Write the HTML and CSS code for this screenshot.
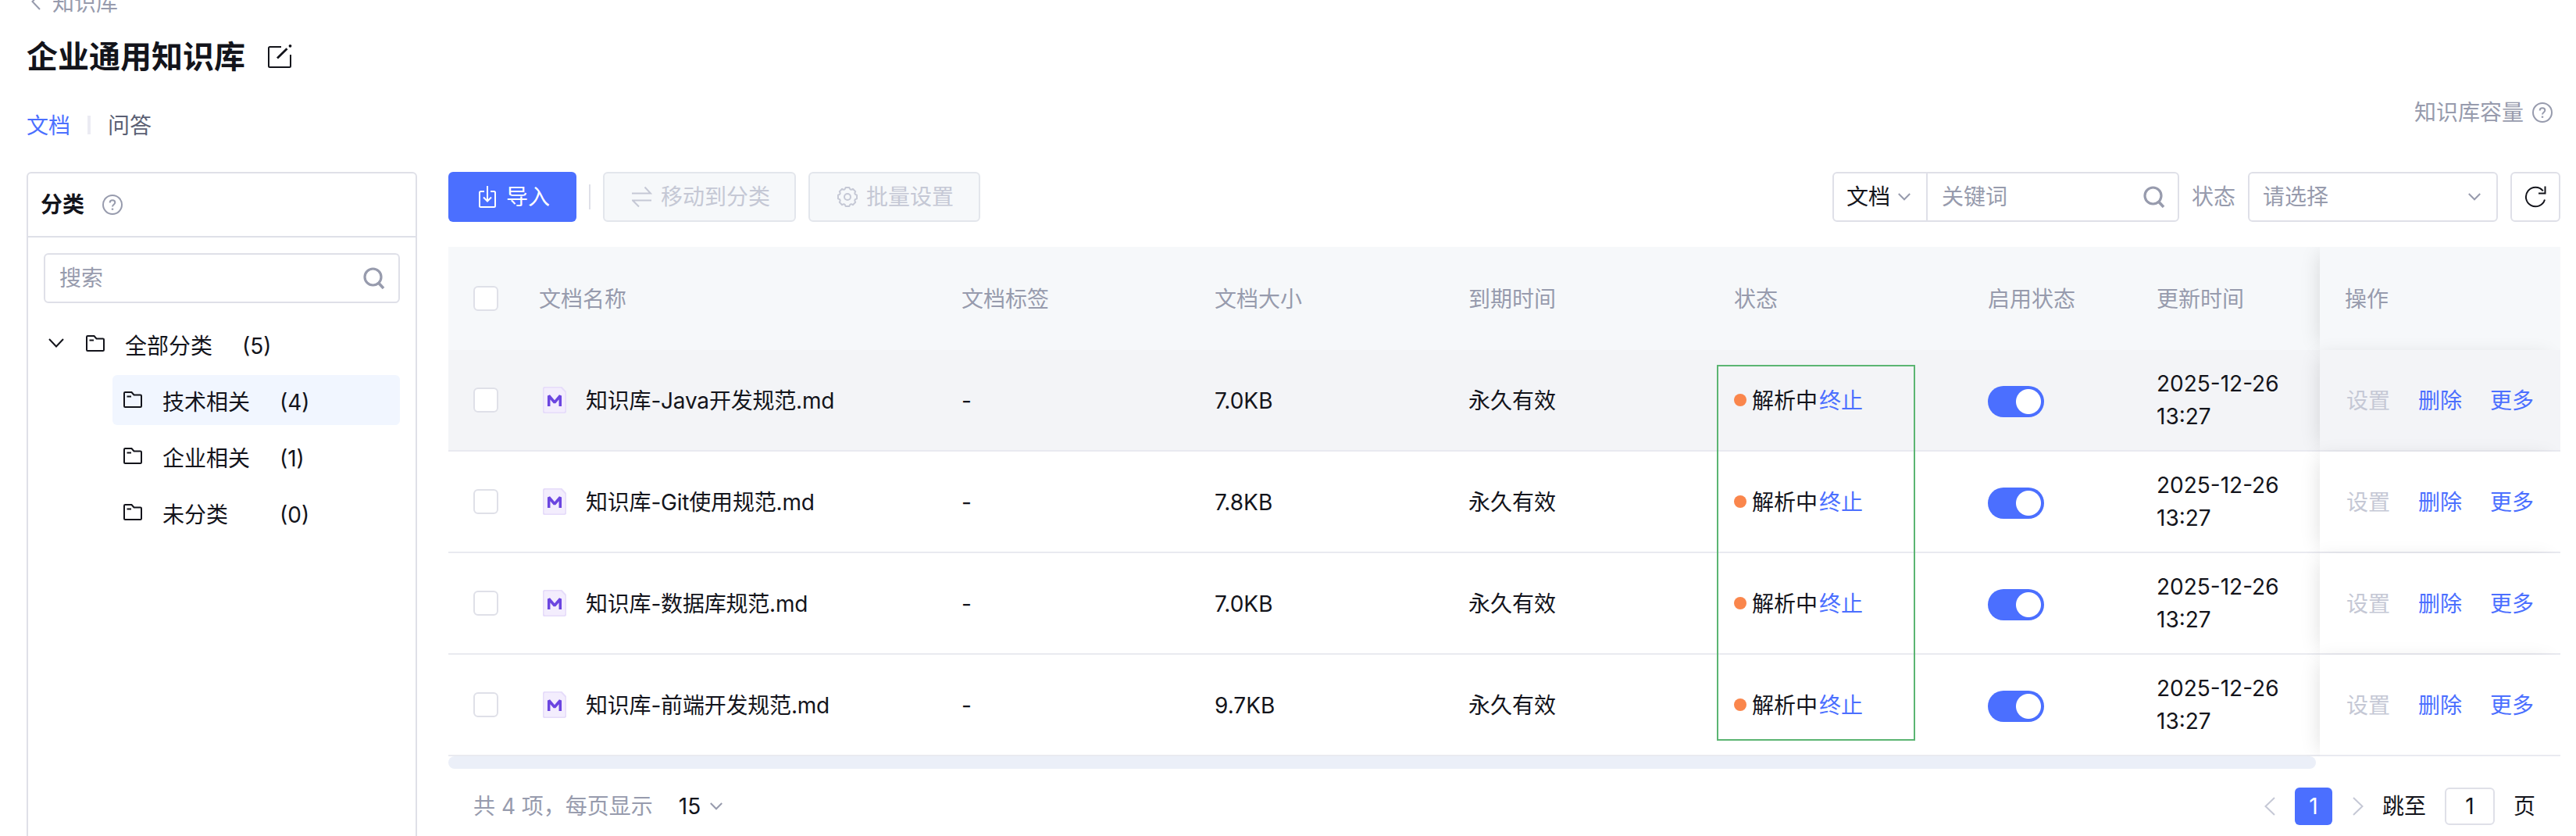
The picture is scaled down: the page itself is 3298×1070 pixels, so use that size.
FILE: index.html
```html
<!DOCTYPE html>
<html lang="zh-CN">
<head>
  <meta charset="UTF-8">
  <title>企业通用知识库</title>
  <link rel="stylesheet" href="styles.css">
</head>
<body>
  <svg class="sprite" xmlns="http://www.w3.org/2000/svg">
    <symbol id="i-help" viewBox="0 0 26 26">
      <circle cx="13" cy="13" r="12" stroke-width="2"/>
      <path d="M9.700 10.500c0-2 1.300-3.200 3.300-3.200s3.300 1.200 3.300 3c0 2.200-3.300 2.600-3.300 5.200" stroke-width="2"/>
      <path d="M13 17.600v2.200" stroke-width="2.400"/>
    </symbol>
    <symbol id="i-search" viewBox="0 0 28 28">
      <circle cx="12.500" cy="12.500" r="10.500" stroke-width="3.200"/>
      <path d="M20 20.500l6 6.500" stroke-width="3.600"/>
    </symbol>
    <symbol id="i-down" viewBox="0 0 16 10">
      <path d="M.8 1L8 8.300 15.200 1" stroke-width="2"/>
    </symbol>
    <symbol id="i-folder" viewBox="0 0 24 21">
      <path d="M1 2.200C1 1.500 1.500 1 2.200 1H10.500l3 3.500h8.300c.7 0 1.200.5 1.200 1.200v13.100c0 .7-.5 1.200-1.200 1.200H2.200C1.500 20 1 19.500 1 18.800zM4.500 6.500h5.500" stroke-width="2"/>
    </symbol>
    <symbol id="i-md" viewBox="0 0 30 34">
      <path d="M3.500.5h20L29.500 7v23.500a3 3 0 0 1-3 3h-23a3 3 0 0 1-3-3v-27a3 3 0 0 1 3-3z" fill="#f3edfd" stroke="#e6dcfa"/>
      <path d="M7.700 25V11.500l7.300 8.500 7.300-8.500V25" stroke="#6b45e0" stroke-width="3.500" stroke-linejoin="bevel"/>
    </symbol>
  </svg>

  <div class="crumb">
    <svg class="crumb-back" viewBox="0 0 12 22"><path d="M11 1L1.500 11 11 21"/></svg>
    <span>知识库</span>
  </div>

  <div class="title">
    <h1>企业通用知识库</h1>
    <svg class="edit" viewBox="0 0 32 32">
      <path d="M18 4H3.500C2.700 4 2 4.700 2 5.500v23c0 .8.700 1.500 1.500 1.500h25c.8 0 1.500-.7 1.500-1.500V14"/>
      <path d="M13 18.500L25.500 6.300" stroke-width="2.800"/>
      <circle cx="29.500" cy="2.800" r="1.900"/>
    </svg>
  </div>

  <div class="subbar">
    <div class="tabs">
      <span class="tab active">文档</span>
      <i class="tab-line"></i>
      <span class="tab">问答</span>
    </div>
    <div class="capacity">知识库容量<svg class="help"><use href="#i-help"/></svg></div>
  </div>

  <div class="layout">
    <aside class="panel">
      <div class="panel-head">分类<svg class="help"><use href="#i-help"/></svg></div>
      <div class="panel-search">搜索<svg class="search"><use href="#i-search"/></svg></div>
      <div class="tree">
        <div class="node root">
          <svg class="arrow" viewBox="0 0 20 12"><path d="M1 1l9 9.500L19 1"/></svg>
          <svg class="folder"><use href="#i-folder"/></svg>
          <span class="node-name">全部分类</span><span>(5)</span>
        </div>
        <div class="node active">
          <svg class="folder"><use href="#i-folder"/></svg>
          <span class="node-name">技术相关</span><span>(4)</span>
        </div>
        <div class="node">
          <svg class="folder"><use href="#i-folder"/></svg>
          <span class="node-name">企业相关</span><span>(1)</span>
        </div>
        <div class="node">
          <svg class="folder"><use href="#i-folder"/></svg>
          <span class="node-name">未分类</span><span>(0)</span>
        </div>
      </div>
    </aside>

    <main class="content">
      <div class="toolbar">
        <div class="btn primary">
          <svg viewBox="0 0 26 28"><path d="M9 7H4.500C3.700 7 3 7.700 3 8.500v17c0 .8.700 1.500 1.500 1.500h17c.8 0 1.500-.7 1.500-1.500v-17C23 7.700 22.300 7 21.500 7H17M13 0v19.500M8 14.500l5 5 5-5"/></svg>
          导入
        </div>
        <i class="btn-line"></i>
        <div class="btn disabled move">
          <svg viewBox="0 0 26 28"><path d="M0 9.500h24L16.500 1.500M25 18.500H1l8 8"/></svg>
          移动到分类
        </div>
        <div class="btn disabled batch">
          <svg viewBox="0 0 26 28" stroke-linejoin="round"><path d="M25.070 11.650V16.350Q20.850 17.250 23.200 20.880L19.880 24.200Q16.250 21.850 15.350 26.070H10.650Q9.750 21.850 6.120 24.200L2.800 20.880Q5.150 17.250.93 16.350V11.650Q5.150 10.750 2.800 7.120L6.120 3.800Q9.750 6.150 10.650 1.930H15.350Q16.250 6.150 19.880 3.800L23.200 7.120Q20.850 10.750 25.070 11.650z"/><circle cx="13" cy="14" r="4"/></svg>
          批量设置
        </div>

        <div class="filters">
          <div class="combo">
            <div class="combo-type">文档<svg class="down"><use href="#i-down"/></svg></div>
            <div class="combo-input">关键词<svg class="search"><use href="#i-search"/></svg></div>
          </div>
          <span class="label">状态</span>
          <div class="select">请选择<svg class="down"><use href="#i-down"/></svg></div>
          <div class="refresh">
            <svg viewBox="0 0 28 28"><path d="M26 17.500A12.300 12.300 0 1 1 23.800 6.300M26.500.5v9h-8.500"/></svg>
          </div>
        </div>
      </div>

      <div class="table">
        <div class="row head">
          <div><i class="checkbox"></i></div>
          <div>文档名称</div>
          <div>文档标签</div>
          <div>文档大小</div>
          <div>到期时间</div>
          <div>状态</div>
          <div>启用状态</div>
          <div>更新时间</div>
          <div class="ops">操作</div>
        </div>
        <div class="row hover">
          <div><i class="checkbox"></i></div>
          <div class="doc"><svg><use href="#i-md"/></svg><span>知识库-Java开发规范.md</span></div>
          <div>-</div>
          <div>7.0KB</div>
          <div>永久有效</div>
          <div><i class="dot"></i>解析中<a class="stop">终止</a></div>
          <div><i class="switch"></i></div>
          <div class="time">2025-12-26<br>13:27</div>
          <div class="ops"><a class="off">设置</a><a>删除</a><a>更多</a></div>
        </div>
        <div class="row">
          <div><i class="checkbox"></i></div>
          <div class="doc"><svg><use href="#i-md"/></svg><span>知识库-Git使用规范.md</span></div>
          <div>-</div>
          <div>7.8KB</div>
          <div>永久有效</div>
          <div><i class="dot"></i>解析中<a class="stop">终止</a></div>
          <div><i class="switch"></i></div>
          <div class="time">2025-12-26<br>13:27</div>
          <div class="ops"><a class="off">设置</a><a>删除</a><a>更多</a></div>
        </div>
        <div class="row">
          <div><i class="checkbox"></i></div>
          <div class="doc"><svg><use href="#i-md"/></svg><span>知识库-数据库规范.md</span></div>
          <div>-</div>
          <div>7.0KB</div>
          <div>永久有效</div>
          <div><i class="dot"></i>解析中<a class="stop">终止</a></div>
          <div><i class="switch"></i></div>
          <div class="time">2025-12-26<br>13:27</div>
          <div class="ops"><a class="off">设置</a><a>删除</a><a>更多</a></div>
        </div>
        <div class="row">
          <div><i class="checkbox"></i></div>
          <div class="doc"><svg><use href="#i-md"/></svg><span>知识库-前端开发规范.md</span></div>
          <div>-</div>
          <div>9.7KB</div>
          <div>永久有效</div>
          <div><i class="dot"></i>解析中<a class="stop">终止</a></div>
          <div><i class="switch"></i></div>
          <div class="time">2025-12-26<br>13:27</div>
          <div class="ops"><a class="off">设置</a><a>删除</a><a>更多</a></div>
        </div>
        <div class="mark"></div>
      </div>
      <div class="scrollbar"></div>

      <div class="pager">
        <span class="total">共 4 项，每页显示</span>
        <span class="size">15</span>
        <svg class="down"><use href="#i-down"/></svg>
        <div class="pages">
          <svg class="turn" viewBox="0 0 14 24"><path d="M13 1L1.500 12 13 23"/></svg>
          <span class="page">1</span>
          <svg class="turn" viewBox="0 0 14 24"><path d="M1 1l11.500 11L1 23"/></svg>
          <span class="jump">跳至</span>
          <span class="jump-input">1</span>
          <span>页</span>
        </div>
      </div>
    </main>
  </div>
</body>
</html>
```
FILE: styles.css
```css
* {
  margin: 0;
  padding: 0;
  box-sizing: border-box;
}

body {
  width: 3298px;
  height: 1070px;
  overflow: hidden;
  background: #fff;
  color: #13141b;
  font-family: Inter, "Noto Sans CJK SC", sans-serif;
  font-size: 28px;
  line-height: 42px;
}

svg {
  flex: none;
  fill: none;
  stroke: currentColor;
  stroke-width: 2;
}

.sprite {
  display: none;
}

.help {
  width: 26px;
  height: 26px;
  color: #979bad;
}

.search {
  width: 28px;
  height: 28px;
  color: #979bad;
}

.down {
  width: 16px;
  height: 10px;
  color: #979bad;
}

/* page header */
.crumb {
  display: flex;
  align-items: center;
  height: 42px;
  margin-top: -17px;
  padding-left: 40px;
  gap: 15px;
  color: #979bad;
}

.crumb-back {
  width: 12px;
  height: 22px;
  margin-bottom: 4px;
}

.title {
  display: flex;
  align-items: center;
  height: 60px;
  margin-top: 17px;
  padding-left: 34px;
  gap: 28px;
}

.title h1 {
  padding-top: 2px;
  font-size: 40px;
  font-weight: 600;
  line-height: 60px;
}

.edit {
  width: 32px;
  height: 32px;
}

.edit circle {
  fill: currentColor;
  stroke: none;
}

.subbar {
  display: flex;
  justify-content: space-between;
  height: 118px;
  padding: 21px 30px 0 34px;
}

.tabs {
  display: flex;
  align-items: center;
  height: 74px;
  gap: 22px;
  color: #5a5f73;
}

.tab {
  padding-top: 2px;
}

.tab.active {
  color: #4b6fff;
}

.tab-line {
  width: 4px;
  height: 24px;
  background: #ebebf3;
}

.capacity {
  display: flex;
  align-items: center;
  height: 42px;
  gap: 11px;
  color: #979bad;
}

.layout {
  display: flex;
  gap: 40px;
  padding: 0 20px 0 34px;
}

/* category panel */
.panel {
  width: 500px;
  height: 870px;
  border: 2px solid #dfe0e8;
  border-radius: 6px;
}

.panel-head {
  display: flex;
  align-items: center;
  height: 82px;
  padding-left: 16px;
  gap: 23px;
  border-bottom: 2px solid #dfe0e8;
  font-weight: 600;
}

.panel-search {
  display: flex;
  align-items: center;
  justify-content: space-between;
  height: 64px;
  margin: 20px 20px 0;
  padding: 0 17px 0 18px;
  border: 2px solid #dfe0e8;
  border-radius: 6px;
  color: #979bad;
}

.tree {
  padding: 20px 20px 0;
}

.node {
  display: flex;
  align-items: center;
  height: 64px;
  margin: 0 0 8px 88px;
  padding-left: 14px;
  border-radius: 6px;
}

.node.root {
  margin-left: 0;
  padding-left: 6px;
}

.node.active {
  background: #f1f6ff;
}

.node span {
  padding-top: 6px;
}

.arrow {
  width: 20px;
  height: 12px;
  margin: 0 28px 2px 0;
}

.folder {
  width: 24px;
  height: 21px;
  margin: 0 26px 2px 0;
}

.node-name {
  width: 150px;
}

/* toolbar */
.content {
  flex: 1;
}

.toolbar {
  display: flex;
  height: 64px;
}

.btn {
  display: flex;
  align-items: center;
  gap: 11px;
  height: 64px;
  border-radius: 6px;
}

.btn svg {
  width: 26px;
  height: 28px;
}

.primary {
  width: 164px;
  padding-left: 37px;
  background: #4b6fff;
  color: #fff;
}

.btn-line {
  width: 2px;
  height: 32px;
  margin: 16px 16px 0;
  background: #dfe0e8;
}

.disabled {
  padding-left: 35px;
  border: 2px solid #e3e6ec;
  background: #f6f8fa;
  color: #c5c8d5;
}

.move {
  width: 247px;
  margin-right: 16px;
}

.batch {
  width: 220px;
}

.filters {
  display: flex;
  margin-left: auto;
  line-height: 60px;
  color: #979bad;
}

.combo,
.select,
.refresh {
  display: flex;
  align-items: center;
  border: 2px solid #dfe0e8;
  border-radius: 6px;
}

.combo {
  width: 444px;
}

.combo-type {
  display: flex;
  align-items: center;
  gap: 10px;
  width: 120px;
  padding-left: 16px;
  border-right: 2px solid #dfe0e8;
  color: #13141b;
}

.combo-input {
  display: flex;
  flex: 1;
  align-items: center;
  justify-content: space-between;
  padding: 0 16px 0 18px;
}

.label {
  margin: 2px 16px 0;
}

.select {
  justify-content: space-between;
  width: 320px;
  padding: 0 20px 0 17px;
}

.refresh {
  justify-content: center;
  width: 64px;
  margin-left: 16px;
  color: #13141b;
}

.refresh svg {
  width: 28px;
  height: 28px;
}

/* document table */
.table {
  position: relative;
  margin-top: 32px;
  overflow: hidden;
}

.row {
  display: grid;
  grid-template-columns: 116px 541px 324px 325px 340px 325px 216px 209px 308px;
  height: 130px;
  background: #fff;
}

.row > div {
  display: flex;
  align-items: center;
  padding-top: 2px;
  border-bottom: 2px solid #e9eaf0;
}

.row > div:first-child {
  padding: 0 0 0 32px;
}

.row > .time {
  padding-top: 0;
}

.row.head {
  height: 132px;
  background: #f6f8fa;
  color: #979bad;
}

.row.head > div {
  border-bottom: none;
}

.row.hover {
  background: #f3f4f7;
}

.row > .ops {
  gap: 36px;
  padding-left: 34px;
  background: inherit;
  color: #4b6fff;
  box-shadow: -8px 0 24px -8px rgba(0, 0, 0, 0.13);
}

.row.head > .ops {
  padding-left: 32px;
  color: #979bad;
}

.ops .off {
  color: #c5c8d5;
}

.checkbox {
  width: 32px;
  height: 32px;
  border: 2px solid #dfe0e8;
  border-radius: 6px;
  background: #fff;
}

.doc svg {
  width: 30px;
  height: 34px;
  margin: 0 25px 2px 5px;
}

.doc span {
  letter-spacing: -0.2px;
}

.dot {
  width: 16px;
  height: 16px;
  margin: 0 7px 2px 0;
  border-radius: 50%;
  background: #fa864c;
}

.stop {
  margin-left: 2px;
  color: #4b6fff;
}

.switch {
  width: 72px;
  height: 40px;
  margin-top: 2px;
  border-radius: 20px;
  background: radial-gradient(circle at 52px 20px, #fff 15.5px, #4b6fff 16.5px);
}

/* outline around the parsing states */
.mark {
  position: absolute;
  top: 151px;
  left: 1624px;
  width: 254px;
  height: 481px;
  border: 2px solid #5bb572;
}

.scrollbar {
  width: 2391px;
  height: 16px;
  border-radius: 8px;
  background: #ebeff8;
}

/* pager */
.pager {
  display: flex;
  align-items: center;
  height: 48px;
  margin-top: 24px;
  padding: 0 32px 0 32px;
}

.total {
  color: #979bad;
}

.size {
  margin: 0 12px 0 33px;
}

.pages {
  display: flex;
  align-items: center;
  margin-left: auto;
}

.turn {
  width: 14px;
  height: 24px;
  color: #c5c8d5;
}

.page {
  width: 48px;
  height: 48px;
  margin: 0 26px 0 25px;
  border-radius: 6px;
  background: #4b6fff;
  color: #fff;
  line-height: 48px;
  text-align: center;
}

.jump {
  margin: 0 24px;
}

.jump-input {
  width: 64px;
  height: 48px;
  margin-right: 24px;
  border: 2px solid #dfe0e8;
  border-radius: 6px;
  line-height: 44px;
  text-align: center;
}
```
